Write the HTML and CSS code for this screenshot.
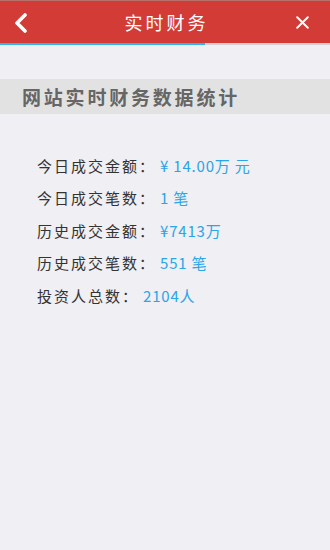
FILE: index.html
```html
<!DOCTYPE html>
<html lang="zh">
<head>
<meta charset="utf-8">
<title>实时财务</title>
<link rel="stylesheet" href="styles.css">
</head>
<body>
<header class="topbar">
  <div class="side left">
    <svg class="icon-back" width="14" height="20" viewBox="0 0 14 20"><polyline points="11,2 3,10 11,18" fill="none" stroke="#fff" stroke-width="3.6" stroke-linecap="round" stroke-linejoin="round"/></svg>
  </div>
  <h1 class="title">实时财务</h1>
  <div class="side right">
    <svg class="icon-close" width="13" height="13" viewBox="0 0 13 13"><path d="M1.2 1.2 L11.8 11.8 M11.8 1.2 L1.2 11.8" fill="none" stroke="#fff" stroke-width="2" stroke-linecap="round"/></svg>
  </div>
</header>
<div class="progress"><div class="progress-fill"></div></div>

<section class="band">
  <h2 class="band-title">网站实时财务数据统计</h2>
</section>

<ul class="stats">
  <li class="row"><span class="label">今日成交金额：</span><span class="value">¥ 14.00万 元</span></li>
  <li class="row"><span class="label">今日成交笔数：</span><span class="value">1 笔</span></li>
  <li class="row"><span class="label">历史成交金额：</span><span class="value">¥7413万</span></li>
  <li class="row"><span class="label">历史成交笔数：</span><span class="value">551 笔</span></li>
  <li class="row"><span class="label">投资人总数：</span><span class="value">2104人</span></li>
</ul>
</body>
</html>
```

FILE: styles.css
```css
* { box-sizing: border-box; }
html, body {
  margin: 0;
  padding: 0;
}
body {
  background: #efeff4;
  font-family: "Noto Sans CJK SC", "Noto Sans", "Liberation Sans", sans-serif;
  width: 330px;
  min-height: 550px;
}
.topbar {
  height: 43px;
  background: #d33b36;
  border-top: 1px solid #b8706a;
  display: grid;
  grid-template-columns: 1fr auto 1fr;
  align-items: center;
}
.side { display: flex; align-items: center; }
.side.left { padding-left: 14px; }
.side.right { justify-content: flex-end; padding-right: 21px; }
.icon-back { display: block; margin-top: 1px; }
.icon-close { display: block; margin-top: 1px; }
.title {
  margin: 0;
  color: #fff;
  font-size: 18px;
  font-weight: 400;
  letter-spacing: 3px;
  margin-right: -3px;
  line-height: 1;
}
.progress {
  height: 2px;
  background: #d4cfd2;
}
.progress-fill {
  width: 205px;
  height: 2px;
  background: #2db6f2;
}
.band {
  margin-top: 34px;
  height: 35px;
  background: #e2e2e2;
  display: flex;
  align-items: center;
  padding-left: 22px;
}
.band-title {
  margin: 0;
  font-size: 19px;
  font-weight: 700;
  color: #666;
  letter-spacing: 2.8px;
  line-height: 1;
}
.stats {
  list-style: none;
  margin: 35px 0 0;
  padding: 0 0 0 37px;
}
.row {
  height: 32.5px;
  display: flex;
  align-items: center;
  font-size: 15px;
  line-height: 1;
}
.label {
  color: #333;
  letter-spacing: 2px;
}
.value {
  color: #2aa5e8;
  margin-left: 4px;
  letter-spacing: 0.8px;
}
```
